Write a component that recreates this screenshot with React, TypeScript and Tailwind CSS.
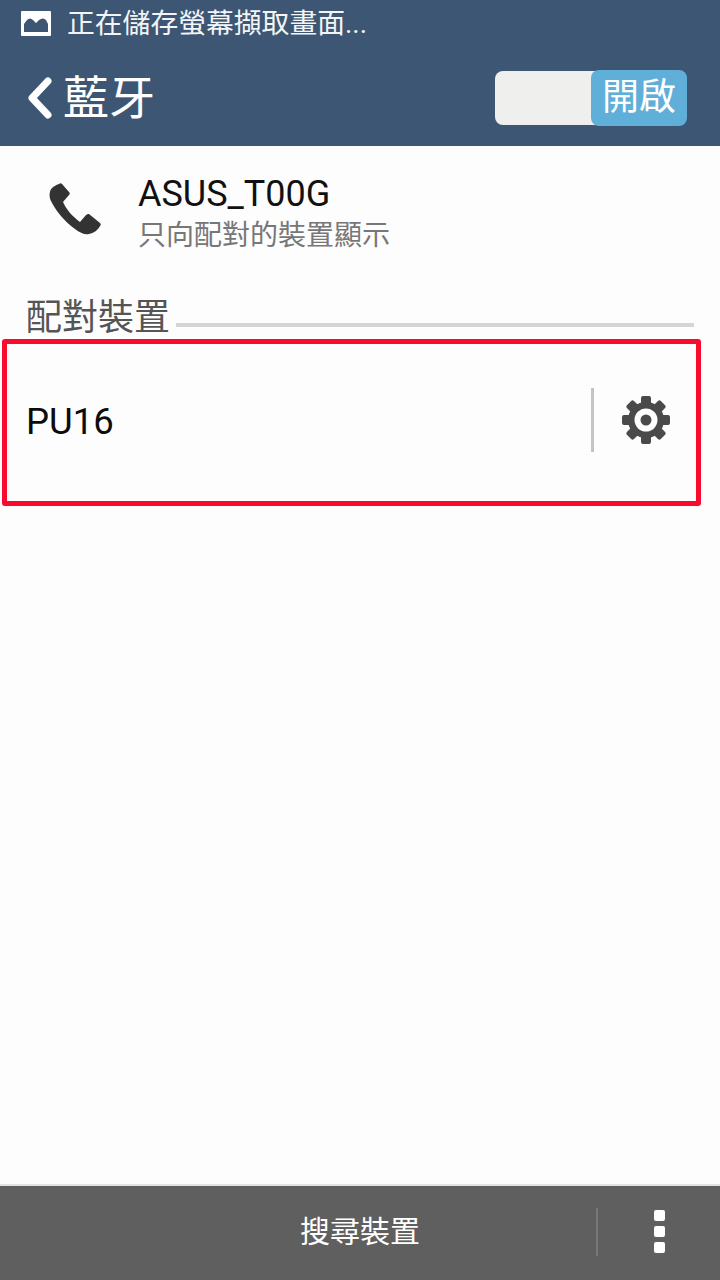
const sans = "font-['Roboto','Noto_Sans_CJK_TC',sans-serif]";

function PictureIcon() {
    return (
        <svg width="30" height="25" viewBox="0 0 30 25" className="shrink-0">
            <rect width="30" height="25" rx="1" fill="#ffffff" />
            <path d="M3 21v-8l3-4q3-3 6 0l3 3 3-3q4-3 7 0l2 4v8z" fill="#3d5673" />
        </svg>
    );
}

function PhoneIcon() {
    return (
        <svg width="52" height="52" viewBox="0 0 52 52" className="shrink-0">
            <path
                d="M10 1c1-1 2-1 3 0l7 8c1 1 1 2 0 3l-6 7c3 7 9 14 17 20l6-7c1-1 2-1 3-1l11 9c1 1 1 2 0 3-2 4-6 7-11 8-4 1-9-1-14-5C15 38 7 28 2 18 0 14 0 8 3 5c2-2 4-3 7-4z"
                fill="#333333"
            />
        </svg>
    );
}

function GearIcon() {
    const teeth = [0, 45, 90, 135, 180, 225, 270, 315];
    return (
        <svg width="48" height="48" viewBox="0 0 48 48" className="shrink-0">
            <circle cx="24" cy="24" r="18" fill="#4a4a4a" />
            {teeth.map((deg) => (
                <rect key={deg} x="19" y="0" width="10" height="12" rx="2" fill="#4a4a4a" transform={`rotate(${deg} 24 24)`} />
            ))}
            <circle cx="24" cy="24" r="11.5" fill="#fdfdfd" />
            <circle cx="24" cy="24" r="5.5" fill="#4a4a4a" />
        </svg>
    );
}

export default function App() {
    return (
        <div className={`flex h-[1280px] w-[720px] flex-col overflow-hidden bg-[#fdfdfd] ${sans}`}>
            {/* status + action bar */}
            <div className="flex h-[146px] shrink-0 flex-col bg-[#3d5673] text-white">
                <div className="flex h-[47px] items-center gap-[16px] pl-[21px]">
                    <PictureIcon />
                    <span className="text-[27.8px] leading-none text-[#f2f4f6]">正在儲存螢幕擷取畫面...</span>
                </div>
                <div className="flex flex-1 items-center justify-between pt-[2px] pl-[27px] pr-[33px]">
                    <div className="flex items-center gap-[11px]">
                        <svg width="25" height="42" viewBox="0 0 25 42" fill="none" stroke="#ffffff" strokeWidth="7" strokeLinecap="round" strokeLinejoin="round">
                            <path d="M21 4 5 21l16 17" />
                        </svg>
                        <span className="text-[46px] leading-none">藍牙</span>
                    </div>
                    <div className="flex items-center">
                        <div className="h-[54px] w-[105px] rounded-l-[8px] bg-[#efefed]" />
                        <div className="-ml-[9px] flex h-[56px] w-[96px] items-center justify-center rounded-[8px] bg-[#5fafd9] text-[37px] leading-none">
                            開啟
                        </div>
                    </div>
                </div>
            </div>

            {/* this device */}
            <div className="flex h-[122px] shrink-0 items-start pl-[49px] pt-[37px]">
                <PhoneIcon />
                <div className="ml-[37px] -mt-[10px] flex flex-col">
                    <span className="text-[36px] leading-[42px] text-[#111111]">ASUS_T00G</span>
                    <span className="mt-[2px] text-[28px] leading-[38px] text-[#777777]">只向配對的裝置顯示</span>
                </div>
            </div>

            {/* paired devices */}
            <div className="flex h-[71px] shrink-0 items-end pl-[26px] pr-[26px]">
                <span className="text-[36px] leading-[42px] text-[#555555]">配對裝置</span>
                <div className="mb-[12px] ml-[6px] h-[4px] flex-1 bg-[#d4d6d6]" />
            </div>
            <div className="ml-[2px] flex h-[167px] w-[699px] shrink-0 items-center rounded-[3px] border-[5px] border-[#f90b2e] pl-[19px]">
                <span className="mb-[1px] flex-1 text-[36.5px] leading-none text-[#0c0c0c]">PU16</span>
                <div className="mb-[5px] h-[64px] w-[3px] bg-[#c4c4c4]" />
                <div className="mb-[5px] ml-[28px] mr-[26px]">
                    <GearIcon />
                </div>
            </div>

            <div className="flex-1" />

            {/* bottom bar */}
            <div className="flex h-[96px] shrink-0 items-center border-t-2 border-[#e2e2e2] bg-[#5f5f5f] pb-[3px]">
                <span className="ml-[300px] w-[296px] text-[30px] leading-none text-white">搜尋裝置</span>
                <div className="h-[48px] w-[2px] bg-[#777777]" />
                <div className="ml-[56px] flex flex-col gap-[5px]">
                    <div className="size-[11px] rounded-[2px] bg-white" />
                    <div className="size-[11px] rounded-[2px] bg-white" />
                    <div className="size-[11px] rounded-[2px] bg-white" />
                </div>
            </div>
        </div>
    );
}
